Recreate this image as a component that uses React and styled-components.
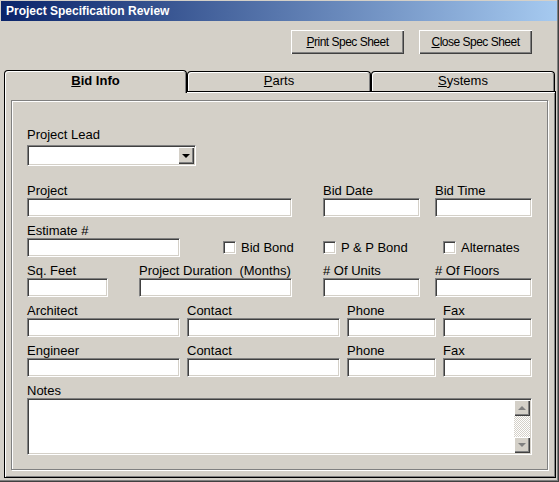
import React from 'react'
import styled, { createGlobalStyle, css } from 'styled-components'

const GlobalStyle = createGlobalStyle`
  html, body {
    margin: 0;
    padding: 0;
    background: #d4d0c8;
  }
  body {
    font-family: "Liberation Sans", Arial, sans-serif;
    color: #000;
  }
`

const sunken = css`
  box-sizing: border-box;
  border-top: 1px solid #808080;
  border-left: 1px solid #808080;
  border-bottom: 1px solid #fff;
  border-right: 1px solid #fff;
  box-shadow: inset 1px 1px #404040, inset -1px -1px #d4d0c8;
`

const raised = css`
  box-sizing: border-box;
  background: #d4d0c8;
  box-shadow: inset 1px 1px #fff, inset -1px -1px #404040, inset -2px -2px #808080;
`

const Window = styled.div`
  width: 559px;
  height: 482px;
  box-sizing: border-box;
  padding: 1px 2px 2px 1px;
  background: #d4d0c8;
  box-shadow: inset -1px -1px #404040, inset -2px -2px #808080;
  display: flex;
  flex-direction: column;
`

const TitleBar = styled.div`
  height: 20px;
  flex-shrink: 0;
  background: linear-gradient(to right, #0a246a, #a6caf0);
  color: #fff;
  font-weight: bold;
  font-size: 12px;
  line-height: 20px;
  padding-left: 5px;
`

const ButtonBar = styled.div`
  display: flex;
  justify-content: flex-end;
  gap: 15px;
  margin-top: 9px;
  padding-right: 25px;
`

const Button = styled.div`
  ${raised};
  width: 113px;
  height: 24px;
  display: flex;
  align-items: center;
  justify-content: center;
  font-size: 12px;
  letter-spacing: -0.5px;
`

const TabStrip = styled.div`
  display: flex;
  align-items: flex-end;
  height: 21px;
  margin: 16px 0 0 3px;
  position: relative;
  z-index: 1;
`

const Tab = styled.div`
  box-sizing: border-box;
  width: ${p => p.$w}px;
  height: ${p => (p.$active ? 23 : 20)}px;
  margin-bottom: ${p => (p.$active ? -2 : 0)}px;
  padding-top: ${p => (p.$active ? 1 : 0)}px;
  border: 1px solid #000;
  border-bottom: none;
  border-radius: 4px 4px 0 0;
  background: #d4d0c8;
  box-shadow: inset 1px 1px #fff, inset -1px 0 #808080;
  font-size: 13px;
  font-weight: ${p => (p.$active ? 'bold' : 'normal')};
  line-height: 18px;
  text-align: center;
`

const Panel = styled.div`
  box-sizing: border-box;
  width: 552px;
  height: 387px;
  margin-left: 3px;
  border: 1px solid #000;
  box-shadow: inset 1px 1px #fff, inset -1px -1px #808080;
  padding: 8px 7px 7px 6px;
  display: flex;
`

const Frame = styled.div`
  flex: 1;
  border: 1px solid #808080;
  box-shadow: inset 1px 1px #fff, 1px 1px #fff;
  padding: 26px 0 0 15px;
`

const Row = styled.div`
  display: flex;
  align-items: flex-end;
  margin-top: ${p => p.$mt ?? 6}px;
`

const Field = styled.div`
  display: flex;
  flex-direction: column;
  width: ${p => p.$w}px;
  margin-left: ${p => p.$ml || 0}px;
`

const Label = styled.div`
  font-size: 13px;
  line-height: 15px;
  height: 15px;
  white-space: pre;
`

const Input = styled.div`
  ${sunken};
  height: ${p => p.$h || 19}px;
  background: #fff;
`

const Combo = styled.div`
  ${sunken};
  width: 169px;
  height: 21px;
  margin-top: 3px;
  background: #fff;
  padding: 1px;
  display: flex;
  justify-content: flex-end;
`

const DropButton = styled.div`
  ${raised};
  width: 16px;
  height: 17px;
  display: flex;
  align-items: center;
  justify-content: center;
`

const Arrow = styled.div`
  width: 0;
  height: 0;
  border-left: ${p => p.$size || 4}px solid transparent;
  border-right: ${p => p.$size || 4}px solid transparent;
  ${p => (p.$up
    ? `border-bottom: ${p.$size || 4}px solid ${p.$color || '#000'};`
    : `border-top: ${p.$size || 4}px solid ${p.$color || '#000'};`)}
`

const CheckItem = styled.div`
  display: flex;
  align-items: center;
  height: 19px;
  width: ${p => p.$w}px;
  margin-left: ${p => p.$ml || 0}px;
  font-size: 13px;
  gap: 5px;
`

const CheckBox = styled.div`
  ${sunken};
  width: 13px;
  height: 13px;
  background: #fff;
`

const NotesBox = styled.div`
  ${sunken};
  width: 505px;
  height: 57px;
  background: #fff;
  padding: 1px;
  display: flex;
  justify-content: flex-end;
`

const ScrollBar = styled.div`
  width: 16px;
  display: flex;
  flex-direction: column;
`

const ScrollButton = styled.div`
  ${raised};
  height: 16px;
  display: flex;
  align-items: center;
  justify-content: center;
`

const ScrollTrack = styled.div`
  flex: 1;
  background: repeating-conic-gradient(#fff 0 25%, #d4d0c8 0 50%) 0 0 / 2px 2px;
`

const App = () => {
  return (
    <>
      <GlobalStyle />
      <Window>
        <TitleBar>Project Specification Review</TitleBar>
        <ButtonBar>
          <Button><span><u>P</u>rint Spec Sheet</span></Button>
          <Button><span><u>C</u>lose Spec Sheet</span></Button>
        </ButtonBar>
        <TabStrip>
          <Tab $w={183} $active><u>B</u>id Info</Tab>
          <Tab $w={184}><u>P</u>arts</Tab>
          <Tab $w={184}><u>S</u>ystems</Tab>
        </TabStrip>
        <Panel>
          <Frame>
            <Field $w={169}>
              <Label>Project Lead</Label>
              <Combo>
                <DropButton><Arrow /></DropButton>
              </Combo>
            </Field>

            <Row $mt={17}>
              <Field $w={265}><Label>Project</Label><Input /></Field>
              <Field $w={97} $ml={31}><Label>Bid Date</Label><Input /></Field>
              <Field $w={97} $ml={15}><Label>Bid Time</Label><Input /></Field>
            </Row>

            <Row>
              <Field $w={153}><Label>Estimate #</Label><Input /></Field>
              <CheckItem $w={100} $ml={43}><CheckBox />Bid Bond</CheckItem>
              <CheckItem $w={120}><CheckBox />P &amp; P Bond</CheckItem>
              <CheckItem $w={90}><CheckBox />Alternates</CheckItem>
            </Row>

            <Row>
              <Field $w={81}><Label>Sq. Feet</Label><Input /></Field>
              <Field $w={153} $ml={31}><Label>Project Duration  (Months)</Label><Input /></Field>
              <Field $w={97} $ml={31}><Label># Of Units</Label><Input /></Field>
              <Field $w={97} $ml={15}><Label># Of Floors</Label><Input /></Field>
            </Row>

            <Row>
              <Field $w={153}><Label>Architect</Label><Input /></Field>
              <Field $w={153} $ml={7}><Label>Contact</Label><Input /></Field>
              <Field $w={89} $ml={7}><Label>Phone</Label><Input /></Field>
              <Field $w={89} $ml={7}><Label>Fax</Label><Input /></Field>
            </Row>

            <Row>
              <Field $w={153}><Label>Engineer</Label><Input /></Field>
              <Field $w={153} $ml={7}><Label>Contact</Label><Input /></Field>
              <Field $w={89} $ml={7}><Label>Phone</Label><Input /></Field>
              <Field $w={89} $ml={7}><Label>Fax</Label><Input /></Field>
            </Row>

            <Row>
              <Field $w={505}>
                <Label>Notes</Label>
                <NotesBox>
                  <ScrollBar>
                    <ScrollButton><Arrow $up $color="#808080" /></ScrollButton>
                    <ScrollTrack />
                    <ScrollButton><Arrow $color="#808080" /></ScrollButton>
                  </ScrollBar>
                </NotesBox>
              </Field>
            </Row>
          </Frame>
        </Panel>
      </Window>
    </>
  )
}

export default App
